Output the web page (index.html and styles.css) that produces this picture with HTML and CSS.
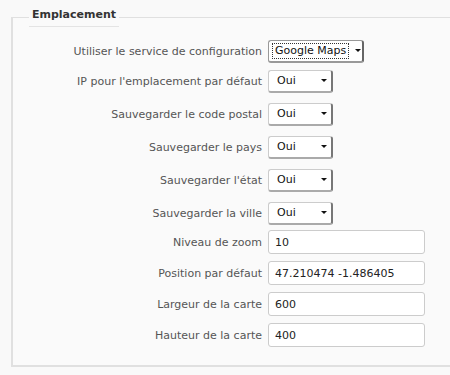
FILE: index.html
```html
<!DOCTYPE html>
<html lang="fr">
<head>
  <meta charset="UTF-8">
  <title>Emplacement</title>
  <link rel="stylesheet" href="styles.css">
</head>
<body>
  <fieldset class="settings">
    <legend>Emplacement</legend>

    <div class="row first">
      <label>Utiliser le service de configuration</label>
      <div class="select focus"><span class="value">Google Maps</span><span class="arrow"></span></div>
    </div>
    <div class="row sel-row">
      <label>IP pour l'emplacement par défaut</label>
      <div class="select small"><span class="value">Oui</span><span class="arrow"></span></div>
    </div>
    <div class="row sel-row">
      <label>Sauvegarder le code postal</label>
      <div class="select small"><span class="value">Oui</span><span class="arrow"></span></div>
    </div>
    <div class="row sel-row">
      <label>Sauvegarder le pays</label>
      <div class="select small"><span class="value">Oui</span><span class="arrow"></span></div>
    </div>
    <div class="row sel-row">
      <label>Sauvegarder l'état</label>
      <div class="select small"><span class="value">Oui</span><span class="arrow"></span></div>
    </div>
    <div class="row last-sel">
      <label>Sauvegarder la ville</label>
      <div class="select small"><span class="value">Oui</span><span class="arrow"></span></div>
    </div>

    <div class="row">
      <label>Niveau de zoom</label>
      <input type="text" value="10">
    </div>
    <div class="row">
      <label>Position par défaut</label>
      <input type="text" value="47.210474 -1.486405">
    </div>
    <div class="row">
      <label>Largeur de la carte</label>
      <input type="text" value="600">
    </div>
    <div class="row">
      <label>Hauteur de la carte</label>
      <input type="text" value="400">
    </div>
  </fieldset>
</body>
</html>
```

FILE: styles.css
```css
body {
  font-family: "DejaVu Sans", Verdana, sans-serif;
  font-size: 11px;
  margin: 0;
  padding: 8px 0 0 11px;
  background-color: #f9f9f9;
  overflow: hidden;
}
.settings {
  width: 460px;
  height: 359px;
  margin: 0;
  padding: 12px 0 0 0;
  border: 1px solid #e0e0e0;
  border-left-width: 2px;
  border-bottom-width: 2px;
  background: #fafafa;
  box-sizing: border-box;
}
.settings legend {
  margin-left: 16px;
  padding: 0 3px 5px;
  border-bottom: 1px solid #e4e4e4;
  font-weight: bold;
  color: #333;
}
.row {
  display: grid;
  grid-template-columns: 249px auto;
  column-gap: 6px;
  align-items: center;
  height: 24px;
  margin-bottom: 7px;
}
.row.first {
  margin-bottom: 6px;
}
.sel-row {
  margin-bottom: 9px;
}
.row.last-sel {
  margin-bottom: 5px;
}
.row label {
  text-align: right;
  color: #555;
}
.select {
  display: flex;
  align-items: center;
  height: 23px;
  box-sizing: border-box;
  background: white;
  border: 1px solid #ccc;
  border-right: 2px solid #777;
  border-bottom: 2px solid #aaa;
  border-radius: 3px;
  color: #111;
  white-space: nowrap;
}
.select .value {
  flex: 1;
  padding-left: 8px;
}
.select .arrow {
  width: 0;
  height: 0;
  margin-right: 4px;
  border-left: 3px solid transparent;
  border-right: 3px solid transparent;
  border-top: 3px solid #111;
}
.select.small {
  width: 65px;
}
.select.focus {
  width: 96px;
  border-color: #999;
  border-right-color: #666;
}
.select.focus .value {
  margin: 2px 6px 2px 3px;
  padding: 0 2px 1px;
  border: 1px dotted #333;
}
.row input {
  width: 157px;
  height: 24px;
  box-sizing: border-box;
  padding: 0 6px;
  border: 1px solid #ccc;
  border-radius: 3px;
  background: white;
  font-family: inherit;
  font-size: 11px;
  color: #222;
}
```
